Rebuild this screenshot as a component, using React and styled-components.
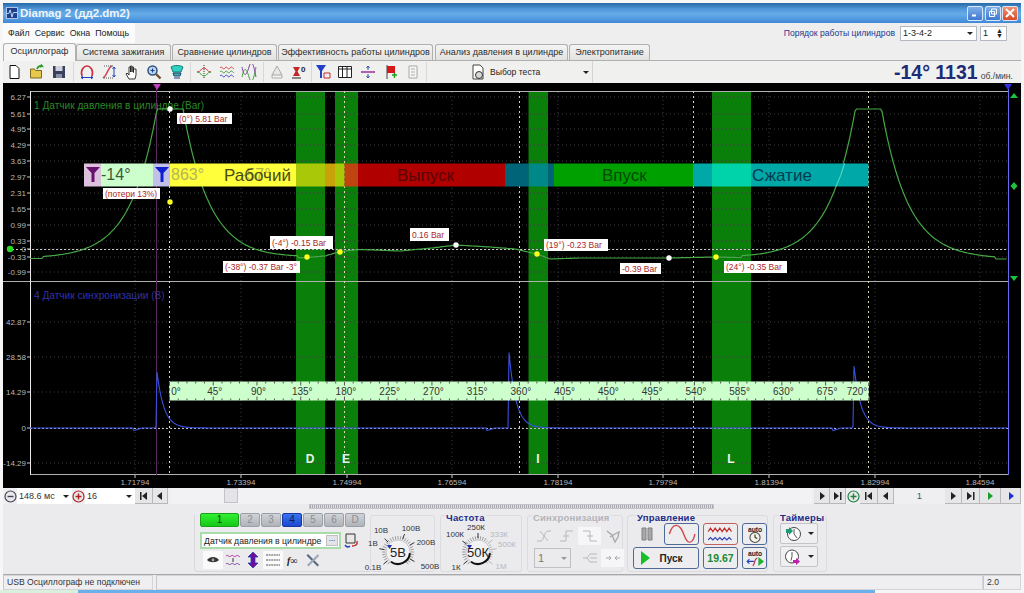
import React from 'react'
import styled, { createGlobalStyle } from 'styled-components'

const GlobalStyle = createGlobalStyle`
  html, body { margin: 0; padding: 0; background: #f6f6f6; overflow: hidden; }
  * { box-sizing: border-box; }
  body { font-family: "Liberation Sans", Arial, sans-serif; font-size: 10px; color: #222; }
`

/* ---------- chart data (page coordinates) ---------- */
const topTicks = [
  ['6.27', 97], ['5.61', 114], ['4.95', 129], ['4.29', 145], ['3.63', 161], ['2.97', 177],
  ['2.31', 193], ['1.65', 209], ['0.99', 225], ['0.33', 241], ['0', 249], ['-0.33', 257], ['-0.99', 272],
]
const lowTicks = [['42.87', 322], ['28.58', 357], ['14.29', 392], ['0', 428], ['-14.29', 463]]
const timeTicks = [
  ['1.71794', 135], ['1.73394', 241], ['1.74994', 347], ['1.76594', 452], ['1.78194', 558],
  ['1.79794', 663], ['1.81394', 769], ['1.82994', 875], ['1.84594', 980],
]
const greenBars = [
  { x: 296, w: 29, l: 'D' }, { x: 335, w: 23, l: 'E', lx: 346 }, { x: 528.5, w: 19.5, l: 'I', lx: 538 }, { x: 712, w: 39, l: 'L', lx: 731 },
]
const phases = [
  [170, 126, '#ffff3c'], [296, 29, '#a8c808'], [325, 10, '#c8a208'], [335, 9.5, '#a8c808'], [344.5, 13.5, '#c04410'],
  [358, 147, '#b00000'], [505, 23.5, '#006478'], [528.5, 19.5, '#008888'], [548, 6, '#006478'], [554, 139, '#00a000'],
  [693, 19, '#00a8a8'], [712, 39, '#00d2aa'], [751, 117.5, '#00a8a8'],
]
const callouts = [
  { x: 177, y: 113, w: 55, h: 11, t: '(0°) 5.81 Bar' },
  { x: 103, y: 188, w: 57, h: 11, t: '(потери 13%)' },
  { x: 270, y: 236, w: 63, h: 13, t: '(-4°) -0.15 Bar' },
  { x: 223, y: 261, w: 77, h: 12, t: '(-38°) -0.37 Bar -3°' },
  { x: 410, y: 228, w: 39, h: 13, t: '0.16 Bar' },
  { x: 544, y: 239, w: 64, h: 12, t: '(19°) -0.23 Bar' },
  { x: 620, y: 263, w: 41, h: 11, t: '-0.39 Bar' },
  { x: 724, y: 261, w: 63, h: 12, t: '(24°) -0.35 Bar' },
]
const dots = [
  [170, 109, '#fff'], [170, 202, '#ffff20'], [307, 257, '#ffff20'], [340, 252, '#ffff20'], [456, 245, '#fff'],
  [537, 254, '#ffff20'], [669, 258, '#fff'], [716, 257, '#ffff20'],
]
const basePts = [
  [30, 258.5], [250, 259], [307, 257.5], [325, 256], [340, 251.5], [360, 249.5], [400, 251], [432, 248], [456, 245],
  [490, 247], [515, 249], [537, 254], [550, 259], [580, 258], [669, 258], [716, 257], [760, 258], [1008, 259],
]
const base = x => {
  for (let i = 1; i < basePts.length; i++) {
    if (x <= basePts[i][0]) {
      const [a, b] = basePts[i - 1]
      const [c, d] = basePts[i]
      return b + ((d - b) * (x - a)) / (c - a)
    }
  }
  return 259
}
const pressurePath = () => {
  const pts = []
  for (let x = 30; x <= 1007; x += 1.5) {
    const a = 245 * Math.exp(-Math.abs(x - 170) / 26.5)
    const b = 245 * Math.exp(-Math.abs(x - 868.5) / 26.5)
    const bump = Math.max(a, b)
    const y = bump > 2 ? Math.max(109, base(x) - Math.min(150, bump)) : base(x)
    pts.push(`${x},${y.toFixed(1)}`)
  }
  return pts.join(' ')
}
const syncPath = () => {
  const spikes = [[157, 56, 134], [508.5, 81, 487], [854, 62, 833]]
  const pts = []
  for (let x = 30; x <= 1007; x += 1) {
    let y = 428
    spikes.forEach(([s, amp, dip]) => {
      if (x >= s) y -= amp * Math.exp(-(x - s) / 7)
      if (x > dip - 1 && x < dip + 8) y += 2.6 * (1 - Math.abs(x - dip) / 8)
      if (x === s - 1) y = 426
    })
    pts.push(`${x},${y.toFixed(1)}`)
  }
  return pts.join(' ')
}

/* ---------- icons ---------- */
const icons = {
  new: <path d="M4 1.5h6l3 3v10H4z" fill="#fff" stroke="#111" />,
  open: <><path d="M1.5 14V5h4l1 1.5h6V14z" fill="#e6c84a" stroke="#7a6a20" /><path d="M8 5c1-3 3-3.500 5-3l-1-1.500M13 2l-2 1" fill="none" stroke="#2c9a2c" strokeWidth="1.800" /></>,
  save: <><path d="M2 2h12v12H2z" fill="#38405c" /><path d="M4.500 2h7v5h-7z" fill="#cfd3e0" /><path d="M5 10h6v4H5z" fill="#8890a8" /></>,
  arc: <><path d="M3 12C1 6 5 2 8 2s7 4 5 10" fill="none" stroke="#d03040" strokeWidth="1.600" /><path d="M2 13.500h12M2 13.500l2-1.500M2 13.500l2 1.500M14 13.500l-2-1.500M14 13.500l-2 1.500" stroke="#2040c0" fill="none" /></>,
  peak: <><path d="M2 14C6 12 7 3 11 2" fill="none" stroke="#d04050" strokeWidth="1.400" /><path d="M3 2h10M3 14h10" stroke="#555" strokeDasharray="1 1" /><path d="M13 3v10M13 3l-1.500 2M13 3l1.500 2M13 13l-1.500-2M13 13l1.500-2" stroke="#2040c0" fill="none" /></>,
  hand: <path d="M5 15l-3-5 1-1 2 2V3h1.500v5V2h1.500v6V3h1.500v5.500V5H12v6l-1 4z" fill="#fff" stroke="#222" strokeWidth=".9" />,
  zoom: <><circle cx="6.500" cy="6.500" r="4.500" fill="#b8d8f0" stroke="#305080" strokeWidth="1.500" /><path d="M4.500 6.500h4M6.500 4.500v4" stroke="#204080" /><path d="M10 10l4.500 4.500" stroke="#705030" strokeWidth="2.400" /></>,
  stack: <><path d="M2 3c3-2 9-2 12 0l-2 5H4z" fill="#30d0c0" stroke="#108078" /><path d="M4 9h8l-1 3H5zM5 14h6" fill="#40b0a0" stroke="#204080" /></>,
  star: <><path d="M8 1v14" stroke="#333" strokeDasharray="1 1" /><path d="M1 8c4 0 4-4 7-4s3 4 7 4" fill="none" stroke="#d04040" /><path d="M1 8c4 0 4 4 7 4s3-4 7-4" fill="none" stroke="#40a040" /></>,
  waves3: <><path d="M1 4c2-3 3 3 5 0s3 3 5 0 3 2 4 0" fill="none" stroke="#d04040" /><path d="M1 8c2-3 3 3 5 0s3 3 5 0 3 2 4 0" fill="none" stroke="#40a040" /><path d="M1 12c2-3 3 3 5 0s3 3 5 0 3 2 4 0" fill="none" stroke="#4040d0" /></>,
  waves2: <><path d="M1 13C3 3 5 3 8 13s5 0 7-10" fill="none" stroke="#40a040" /><path d="M1 3c2 10 4 10 7 0s5 0 7 10" fill="none" stroke="#8040a0" /></>,
  auto: <><path d="M8 2l5 9H3z" fill="#e8e8e8" stroke="#a8a8a8" /><path d="M3 11v3h10v-3" fill="none" stroke="#b0b0b0" /></>,
  zero: <><path d="M2 3h7L6.500 7.500 9 12H2l2.500-4.500z" fill="#c02828" /><path d="M1 14h9" stroke="#222" /><text x="10" y="8" fontSize="8" fontWeight="700" fill="#222" fontFamily="Liberation Sans">0</text></>,
  funnel: <><path d="M1 1h10L7 7v7H5V7z" fill="#2040c8" /><path d="M9 9h6v5H9z" fill="#f0f0f0" stroke="#c03030" /></>,
  table: <path d="M1.500 2.500h13v11h-13zM1.500 5h13M5.500 2.500v11M10 2.500v11" fill="#fff" stroke="#222" />,
  divide: <><path d="M1 8h14" stroke="#902090" strokeWidth="1.400" /><path d="M8 2v4M8 2L6.500 4M8 2l1.500 2M8 14v-4M8 14l-1.500-2M8 14l1.500-2" fill="none" stroke="#3050b0" /></>,
  flag: <><path d="M5 1v14" stroke="#444" /><path d="M5 2h8v7H5z" fill="#d81818" /><path d="M10 11h5M12.500 9v5" stroke="#20a020" strokeWidth="1.400" /></>,
  page: <path d="M4 2h8v12H4zM6 5h4M6 8h4M6 11h4" fill="#f8f8f8" stroke="#a8a8a8" />,
  gearPage: <><path d="M3 1h7l3 3v11H3z" fill="#fff" stroke="#444" /><circle cx="9" cy="11" r="3.500" fill="#d8d8d8" stroke="#333" /></>,
  eye: <><path d="M2 8c3-4 9-4 12 0-3 3-9 3-12 0z" fill="#333" /><circle cx="8" cy="8" r="1.400" fill="#aaa" /></>,
  wavesV: <><path d="M1 4c2-2 3 2 5 0s3 2 5 0 3 2 4 0" fill="none" stroke="#b030a0" /><path d="M8 6v4" stroke="#333" /><path d="M1 12c2-2 3 2 5 0s3 2 5 0 3 2 4 0" fill="none" stroke="#8040a0" /></>,
  updown: <path d="M8 0l5 5h-3v6h3l-5 5-5-5h3V5H3z" fill="#6a10a0" stroke="#2030b0" strokeWidth=".7" />,
  lines: <path d="M1 3h14M1 8h14M1 13h14" stroke="#555" strokeDasharray="2 .6" />,
  fx: <text x="2" y="12" fontSize="10" fontWeight="700" fontStyle="italic" fill="#222" fontFamily="Liberation Serif">f∞</text>,
  tools: <><path d="M3 2l11 11-1.500 1.500L1.500 3.500z" fill="#5a6a80" /><path d="M13 2L2 13l1.500 1.500L14 4z" fill="#9aa8b8" /></>,
  board: <><path d="M3 1h9v9H3z" fill="#e8e8e8" stroke="#333" /><path d="M2 12c2 3 4 2 5 1" fill="none" stroke="#2040c0" strokeWidth="1.400" /><path d="M14 8c1 4-2 5-5 5" fill="none" stroke="#c02020" strokeWidth="1.400" /></>,
  slope: <path d="M1 13h4C8 13 8 3 12 3h3M4 3l8 10" fill="none" stroke="#b8b8b8" />,
  rise: <path d="M1 13h6V3h7M4 8h6" fill="none" stroke="#b8b8b8" />,
  fall: <path d="M1 3h7v10h7M5 8h6" fill="none" stroke="#b8b8b8" />,
  pulseOff: <path d="M2 3l5 4 3 7 3-5 1-5-4 2-5 3" fill="none" stroke="#a8a8a8" strokeWidth="1.300" />,
  branch: <path d="M1 8h4M5 8l3-4h7M5 8l3 4h7M8 8h7" fill="none" stroke="#b8b8b8" />,
  merge: <path d="M1 8h5l-2-2M6 8l-2 2M15 8h-5l2-2M10 8l2 2" fill="none" stroke="#a8a8a8" />,
  pause: <path d="M3 2h4v12H3zM9 2h4v12H9z" fill="#a8a8a8" stroke="#808080" />,
  sine: <path d="M1 8C4-3 9-1 12 9s7 6 8-1" transform="scale(1.150 1)" fill="none" stroke="#d04a4a" strokeWidth="1.100" />,
  wave2: <><path d="M1 6l2-3 2 3 2-3 2 3 2-3 2 3 2-3 2 3 2-3 2 3" fill="none" stroke="#c03030" /><path d="M1 13l2-2 2 2 2-2 2 2 2-2 2 2 2-2 2 2 2-2 2 2" fill="none" stroke="#3040b0" /></>,
  autoClock: <><text x="8" y="6" textAnchor="middle" fontSize="6" fontWeight="700" fill="#223" fontFamily="Liberation Sans">auto</text><circle cx="8" cy="11" r="4.500" fill="#f4f4e8" stroke="#555" /><path d="M8 11V8.500M8 11l2 1" stroke="#333" /></>,
  autoPlay: <><text x="8" y="6" textAnchor="middle" fontSize="6" fontWeight="700" fill="#223" fontFamily="Liberation Sans">auto</text><path d="M11 7l5 4-5 4z" fill="#1eb02e" /><path d="M1 11h6M3 9l-2 2 2 2" fill="none" stroke="#2040c0" /><path d="M6 15c2-1 1-6 4-7" fill="none" stroke="#c03060" /></>,
  clockIn: <><circle cx="9" cy="8" r="6.500" fill="#fff" stroke="#444" /><path d="M9 8V3M9 8l3 4" stroke="#555" /><path d="M1 3h3V1l4 4-4 4V7H1z" fill="#1c9a78" /></>,
  clockOut: <><circle cx="7" cy="7.500" r="6.500" fill="#fff" stroke="#444" /><path d="M7 7.500V3M7 7.500l-1 4" stroke="#555" /><path d="M8 11h3V9l4 3.500L11 16v-2H8z" fill="#c020b0" /></>,
}

const Icon = ({ name, size = 16, vw = 16 }) => (
  <svg width={size} height={size} viewBox={`0 0 ${vw} 16`}>{icons[name]}</svg>
)

/* ---------- window chrome ---------- */
const Window = styled.div`
  width: 1024px;
  height: 593px;
  padding: 3px 3px 0;
  display: flex;
  flex-direction: column;
  overflow: hidden;
`
const TitleBar = styled.div`
  height: 20px;
  flex: none;
  display: flex;
  align-items: center;
  padding: 0 3px 0 3px;
  background: linear-gradient(#2668a8 0, #4f97d8 30%, #66ace8 55%, #4d94de 85%, #3f87d6 100%);
`
const AppLogo = styled.span`
  width: 12px;
  height: 12px;
  background: #1f3f8c;
  border: 1px solid #a8c4e8;
  margin-right: 2px;
  display: flex;
`
const TitleText = styled.span`
  flex: 1;
  color: #eef4fc;
  font: bold 11.500px "Liberation Sans", sans-serif;
  letter-spacing: 0;
`
const WinBtn = styled.span`
  width: 16px;
  height: 15px;
  margin-left: 1.500px;
  border-radius: 2px;
  border: 1px solid #d8e6f8;
  background: ${p => (p.$close ? 'linear-gradient(#f09070,#d84a28)' : 'linear-gradient(#7fb0e8,#3f78d0)')};
  display: flex;
  align-items: center;
  justify-content: center;
`
const MenuRow = styled.div`
  height: 20px;
  flex: none;
  display: flex;
  align-items: center;
  background: #efeeee;
`
const MenuBar = styled.div`
  width: 132px;
  height: 100%;
  background: #fbfbfb;
  display: flex;
  align-items: center;
  gap: 5px;
  padding-left: 5px;
  font-size: 8.800px;
  color: #222;
`
const OrderLabel = styled.span`
  margin-left: auto;
  color: #1c3a90;
  font-size: 8.600px;
  margin-right: 5px;
`
const Field = styled.div`
  width: ${p => p.$w}px;
  height: 15px;
  background: #fff;
  border: 1px solid #b4b8c0;
  font-size: 9px;
  padding-left: 2px;
  display: flex;
  align-items: center;
  margin-right: ${p => p.$mr || 0}px;
`
const Caret = styled.span`
  margin-left: auto;
  margin-right: 3px;
  width: 0;
  height: 0;
  border-left: 3px solid transparent;
  border-right: 3px solid transparent;
  border-top: 3px solid ${p => p.$dim ? '#999' : '#222'};
`
const Spin = styled.span`
  margin-left: auto;
  margin-right: 3px;
  font-size: 7px;
  line-height: 5px;
  color: #222;
  text-align: center;
`
const TabStrip = styled.div`
  height: 18px;
  flex: none;
  display: flex;
  align-items: flex-end;
  background: #efeeee;
  border-bottom: 1px solid #b0b0b0;
`
const Tab = styled.div`
  width: ${p => p.$w}px;
  height: ${p => (p.$on ? 18 : 16)}px;
  margin-left: ${p => p.$ml || 0}px;
  background: ${p => (p.$on ? '#f6f6f6' : 'linear-gradient(#f4f4f2,#e2e2e0)')};
  border: 1px solid #b0b0b0;
  border-bottom: none;
  border-radius: 3px 3px 0 0;
  font-size: 9px;
  text-align: center;
  line-height: ${p => (p.$on ? 15 : 14)}px;
  color: #2c2c2c;
  white-space: nowrap;
  position: relative;
  top: ${p => (p.$on ? 1 : 0)}px;
`
const Toolbar = styled.div`
  height: 22px;
  flex: none;
  display: flex;
  align-items: center;
  background: #f0f0ee;
`
const Tool = styled.span`
  width: 22.500px;
  height: 20px;
  flex: none;
  display: flex;
  align-items: center;
  justify-content: center;
`
const ToolSep = styled.span`
  width: 1px;
  height: 20px;
  flex: none;
  margin: 0 ${p => p.$m ?? 2}px;
  background: #d8d8d8;
`
const TestPick = styled.div`
  width: 164px;
  height: 100%;
  padding-left: 41px;
  display: flex;
  align-items: center;
  gap: 4px;
  font-size: 8.600px;
  border-right: 1px solid #d4d4d4;
`
const Rpm = styled.div`
  margin-left: auto;
  padding-right: 8px;
  color: #1c2c78;
  font-weight: 700;
  font-size: 19.500px;
  display: flex;
  align-items: baseline;
  gap: 3px;
  white-space: nowrap;
`
const RpmUnit = styled.span`
  font-size: 8.600px;
  font-weight: 400;
  color: #444;
`

/* ---------- chart ---------- */
const Scope = styled.svg`
  display: block;
  flex: none;
  width: 1018px;
  height: 405px;
  background: #000;
`
const AxisText = styled.text`
  font-family: "Liberation Sans", sans-serif;
  font-size: 8px;
  fill: #b8b8b8;
  text-anchor: ${p => p.$anchor || 'end'};
`
const ChannelText = styled.text`
  font-family: "Liberation Sans", sans-serif;
  font-size: 10.100px;
  fill: ${p => p.$c};
`
const PhaseText = styled.text`
  font-family: "Liberation Sans", sans-serif;
  font-size: ${p => p.$s || 17}px;
  fill: ${p => p.$c};
`
const CalloutText = styled.text`
  font-family: "Liberation Sans", sans-serif;
  font-size: 8.500px;
  fill: #a82828;
`
const RulerText = styled.text`
  font-family: "Liberation Sans", sans-serif;
  font-size: 10px;
  fill: #333;
  text-anchor: middle;
`
const SectorLetter = styled.text`
  font-family: "Liberation Sans", sans-serif;
  font-size: 12px;
  font-weight: 700;
  fill: #e8f4e8;
  text-anchor: middle;
`

const Funnel = ({ x, c }) => <path d={`M${x} 167h14l-5.500 6v9h-3v-9z`} fill={c} />

const rulerLabelX = d => {
  if (d === 0) return 176
  if (d === 720) return 857
  return 171 + d * 0.972
}

const ScopeView = () => {
  const gridY = [...topTicks, ...lowTicks].map(t => t[1])
  const quarter = [169.5, 344.5, 519.5, 693.5, 868.5]
  const rulerMarks = []
  for (let d = 0; d <= 720; d += 9) rulerMarks.push(d)
  return (
    <Scope viewBox="3 83 1018 405">
      {greenBars.map(b => <rect key={b.l} x={b.x} y={91} width={b.w} height={384} fill="#0a800a" />)}
      {gridY.map(y => <line key={y} x1={30} x2={1008} y1={y} y2={y} stroke="#3c3c3c" strokeDasharray="1 3" />)}
      {timeTicks.map(t => <line key={t[1]} x1={t[1]} x2={t[1]} y1={92} y2={475} stroke="#3c3c3c" strokeDasharray="1 3" />)}

      {/* frame */}
      <path d="M30 91.500H1008M3 281.500H1008M30 474.500H1008" stroke="#b0b0b0" fill="none" />
      <path d="M30.500 91V475" stroke="#e8e8e8" />
      <path d="M1008.500 88V475" stroke="#6a6af0" />
      {[...topTicks, ...lowTicks].map(t => <line key={t[1]} x1={27} x2={30} y1={t[1]} y2={t[1]} stroke="#ccc" />)}
      {topTicks.map(t => <AxisText key={t[0]} x={26} y={t[1] + 3}>{t[0]}</AxisText>)}
      {lowTicks.map(t => <AxisText key={t[1]} x={26} y={t[1] + 3}>{t[0]}</AxisText>)}
      {timeTicks.map(t => (
        <g key={t[0]}>
          <line x1={t[1]} x2={t[1]} y1={475} y2={478} stroke="#ccc" />
          <AxisText $anchor="middle" x={t[1]} y={485}>{t[0]}</AxisText>
        </g>
      ))}
      <ChannelText $c="#2a8a2a" x={34} y={109}>1 Датчик давления в цилиндре (Bar)</ChannelText>
      <ChannelText $c="#3232a8" x={34} y={299}>4 Датчик синхронизации (B)</ChannelText>

      {/* zero line and cycle markers */}
      <line x1={8} x2={1008} y1={249.500} y2={249.500} stroke="#c8c8c8" strokeDasharray="2 2" />
      <line x1={30} x2={1008} y1={428.500} y2={428.500} stroke="#c0c0c0" strokeDasharray="2 2" />
      {quarter.map(x => <line key={x} x1={x} x2={x} y1={91} y2={475} stroke="#d8d8b0" strokeDasharray="2 3" />)}
      <line x1={156.500} x2={156.500} y1={88} y2={475} stroke="#5c2a5c" />
      <path d="M153 84h8l-4 6z" fill="#c040c0" />
      <path d="M1004 84h8l-4 6z" fill="#3030e0" />

      <polyline points={syncPath()} fill="none" stroke="#3a50e0" strokeWidth="1.100" />
      <polyline points={pressurePath()} fill="none" stroke="#44a844" strokeWidth="1.200" />

      {/* phase band */}
      {phases.map(p => <rect key={p[0]} x={p[0]} y={163.500} width={p[1]} height={23} fill={p[2]} />)}
      <rect x={84} y={163.500} width={17} height={23} fill="#dcc0dc" />
      <rect x={101} y={163.500} width={52} height={23} fill="#ccffcc" />
      <rect x={153} y={163.500} width={17} height={23} fill="#c0c0e8" />
      <Funnel x={86} c="#6a1070" />
      <Funnel x={155} c="#1020d0" />
      <PhaseText $s={16} $c="#3c5a3c" x={101} y={180}>-14°</PhaseText>
      <PhaseText $s={16} $c="#b4b45a" x={171} y={180}>863°</PhaseText>
      <PhaseText $s={16} $c="#b8b83c" x={241} y={180}>-57°</PhaseText>
      <PhaseText $c="#4a4a18" x={224} y={181}>Рабочий</PhaseText>
      <PhaseText $c="#5a0404" x={397} y={181}>Выпуск</PhaseText>
      <PhaseText $c="#004a00" x={602} y={181}>Впуск</PhaseText>
      <PhaseText $c="#003c50" x={752} y={181}>Сжатие</PhaseText>
      <path d="M836 186.500Q841 176 844.500 163.500" fill="none" stroke="#60e0c8" />

      {/* degree ruler */}
      <rect x={169.500} y={381.500} width={699} height={19} fill="#ccffcc" />
      {rulerMarks.map(d => {
        const x = 169.5 + d * 0.972
        const major = d % 45 === 0
        return <path key={d} d={`M${x} 381.500v${major ? 4 : 2}M${x} 400.500v-${major ? 4 : 2}`} stroke="#555" />
      })}
      {rulerMarks.filter(d => d % 45 === 0).map(d => (
        <RulerText key={d} x={rulerLabelX(d)} y={395}>{d}°</RulerText>
      ))}

      {greenBars.map(b => <SectorLetter key={b.l} x={b.lx || 310} y={463}>{b.l}</SectorLetter>)}

      {callouts.map(c => (
        <g key={c.t}>
          <rect x={c.x} y={c.y} width={c.w} height={c.h} fill="#fff" />
          <CalloutText x={c.x + 2} y={c.y + c.h / 2 + 3}>{c.t}</CalloutText>
        </g>
      ))}
      {dots.map(d => <circle key={d[0] + '-' + d[1]} cx={d[0]} cy={d[1]} r={2.700} fill={d[2]} />)}
      <circle cx={10} cy={249} r={3.200} fill="#28d828" />
      <path d="M1010 98l4-5 4 5zM1010 276h8l-4 5zM1014 182l3.500 4-3.500 4-3.500-4z" fill="#20c040" />
    </Scope>
  )
}

/* ---------- scroll / navigation row ---------- */
const NavRow = styled.div`
  height: 16px;
  flex: none;
  display: flex;
  align-items: stretch;
  background: #efeff1;
`
const RoundBtn = styled.span`
  width: ${p => p.$w || 14}px;
  flex: none;
  display: flex;
  align-items: center;
  justify-content: center;
`
const NavSelect = styled.div`
  width: ${p => p.$w}px;
  flex: none;
  background: #fff;
  display: flex;
  align-items: center;
  font-size: 9px;
  padding-left: 2px;
  color: #333;
`
const NavBtn = styled.span`
  width: ${p => p.$w || 16}px;
  flex: none;
  display: flex;
  align-items: center;
  justify-content: center;
  background: #e6e6e8;
  border-right: 1px solid #b8b8b8;
  border-bottom: 1px solid #b8b8b8;
`
const ScrollTrack = styled.div`
  flex: 1;
  margin: 0 2px;
  background: #f2f2f4;
  padding-left: 54px;
`
const ScrollThumb = styled.div`
  width: 14px;
  height: 15px;
  background: #e4e4e8;
  border: 1px solid #c4c4c8;
`
const PageNo = styled.span`
  width: 51px;
  flex: none;
  text-align: center;
  line-height: 16px;
  color: #555;
  font-size: 9.500px;
`

const Nav = ({ k, c = '#222' }) => {
  const d = {
    play: 'M3 1l5 4-5 4z',
    end: 'M1 1l5 4-5 4zM7 1h1.500v8H7z',
    start: 'M1 1h1.500v8H1zM8 1L3 5l5 4z',
    back: 'M7 1L2 5l5 4z',
  }[k]
  return <svg width="10" height="10" viewBox="0 0 10 10"><path d={d} fill={c} /></svg>
}
const CircleGlyph = ({ c, plus }) => (
  <svg width="13" height="13" viewBox="0 0 13 13">
    <circle cx="6.500" cy="6.500" r="5.500" fill="#e8e8ec" stroke={c} strokeWidth="1.200" />
    <path d={plus ? 'M3.500 6.500h6M6.500 3.500v6' : 'M3.500 6.500h6'} stroke={c} strokeWidth="1.400" />
  </svg>
)

/* ---------- control panel ---------- */
const Dock = styled.div`
  height: 71px;
  flex: none;
  background: #ebebee;
  border-bottom: 1px solid #a8a8a8;
`
const Splitter = styled.div`
  height: 5px;
  width: 405px;
  margin-left: 306px;
  background: repeating-linear-gradient(90deg, #a8a8b0 0 1px, #e0e0e4 1px 2px);
  border: 1px solid #c4c4c8;
`
const DockRow = styled.div`
  display: flex;
  padding: 6px 0 0 191px;
`
const ChannelGroup = styled.div`
  width: 176px;
  height: 57px;
  padding-left: 5px;
  border-left: 1px solid #d8d8dc;
  border-bottom: 1px solid #d8d8dc;
  border-radius: 0 0 0 4px;
  flex: none;
`
const ChannelBtns = styled.div`
  display: flex;
  gap: 1px;
  margin-top: -2px;
`
const ChannelBtn = styled.span`
  width: ${p => p.$w || 20}px;
  height: 14px;
  border-radius: 2px;
  border: 1px solid ${p => (p.$tone === 'green' ? '#18a018' : p.$tone === 'blue' ? '#1838a8' : '#9aa0a8')};
  background: ${p => (p.$tone === 'green' ? 'linear-gradient(#30f030,#18c818)' : p.$tone === 'blue' ? 'linear-gradient(#3a74f0,#1c48d0)' : 'linear-gradient(#d0d4d8,#b0b4b8)')};
  color: ${p => (p.$tone === 'green' ? '#0c3c0c' : p.$tone === 'blue' ? '#0c1c60' : '#8c8c90')};
  font-size: 10px;
  line-height: 12px;
  text-align: center;
`
const SensorRow = styled.div`
  display: flex;
  align-items: center;
  gap: 2px;
  margin-top: 5px;
`
const SensorBox = styled.div`
  width: 141px;
  height: 17px;
  background: #fff;
  border: 2px solid #a8dca8;
  font-size: 8.700px;
  padding-left: 2px;
  display: flex;
  align-items: center;
  white-space: nowrap;
`
const DotsBtn = styled.span`
  margin-left: auto;
  width: 12px;
  height: 11px;
  margin-right: 1px;
  background: #e4e4e8;
  border: 1px solid #c0c0c4;
  font-size: 8px;
  line-height: 6px;
  text-align: center;
`
const MiniTools = styled.div`
  display: flex;
  margin-top: 2px;
  padding-left: 3px;
`
const MiniTool = styled.span`
  width: 20px;
  height: 18px;
  display: flex;
  align-items: center;
  justify-content: center;
  background: ${p => (p.$on ? '#fafafa' : 'transparent')};
`
const Panel = styled.div`
  width: ${p => p.$w}px;
  height: 57px;
  margin-right: ${p => p.$mr ?? 5}px;
  flex: none;
  border: 1px solid #dcdce0;
  border-radius: 3px;
  display: flex;
  flex-direction: column;
`
const PanelTitle = styled.div`
  margin: -4px 0 0 ${p => p.$ml ?? 4}px;
  height: 11px;
  line-height: 11px;
  font-size: 9.500px;
  font-weight: 700;
  letter-spacing: .2px;
  color: ${p => (p.$dim ? '#b4b4b8' : '#1c2c88')};
  white-space: nowrap;
  background: #ebebee;
  align-self: flex-start;
  padding: 0 1px;
`
const KnobSvg = styled.svg`
  display: block;
  overflow: visible;
`
const KnobLabel = styled.text`
  font-family: "Liberation Sans", sans-serif;
  font-size: 8px;
  fill: ${p => (p.$dim ? '#b8b8bc' : '#333')};
  text-anchor: middle;
`
const KnobValue = styled.text`
  font-family: "Liberation Sans", sans-serif;
  font-size: 13px;
  fill: #222;
  text-anchor: middle;
`
const SyncGrid = styled.div`
  display: grid;
  grid-template-columns: repeat(4, 23px);
  align-items: center;
  padding: 4px 0 0 4px;
  row-gap: 3px;
`
const SyncCell = styled.span`
  height: 18px;
  display: flex;
  align-items: center;
  justify-content: center;
  background: ${p => (p.$on ? '#f6f6f8' : 'transparent')};
`
const SyncSelect = styled.div`
  grid-column: span 2;
  width: 37px;
  height: 20px;
  margin-left: 2px;
  background: #ebebee;
  border: 1px solid #c0c0c4;
  display: flex;
  align-items: center;
  padding-left: 3px;
  font-size: 11px;
  color: #777;
`
const CtlGrid = styled.div`
  display: grid;
  grid-template-columns: 27px 35px 35px 25px;
  column-gap: 4px;
  row-gap: 2px;
  margin: 0 0 0 5px;
`
const CtlBtn = styled.span`
  height: 22px;
  grid-column: span ${p => p.$span || 1};
  border-radius: 3px;
  border: 1px solid ${p => (p.$tone === 'red' ? '#c06060' : p.$tone === 'flat' ? 'transparent' : '#506a98')};
  background: ${p => (p.$tone === 'flat' ? 'transparent' : '#ededf0')};
  display: flex;
  align-items: center;
  justify-content: center;
`
const StartLabel = styled.span`
  font-weight: 700;
  font-size: 10px;
  color: #222;
  flex: 1;
  text-align: center;
  padding-right: 6px;
`
const Readout = styled.span`
  font-weight: 700;
  font-size: 10.500px;
  color: #1c8a30;
`
const PlayMark = styled.span`
  width: 0;
  height: 0;
  margin-left: 7px;
  border-left: 9px solid #18c028;
  border-top: 7px solid transparent;
  border-bottom: 7px solid transparent;
`
const TimerCol = styled.div`
  display: flex;
  flex-direction: column;
  gap: 2px;
  padding-left: 6px;
`
const TimerBtn = styled.span`
  width: 38px;
  height: 21px;
  border: 1px solid #c4c4c8;
  border-radius: 2px;
  background: #efeff2;
  display: flex;
  align-items: center;
  padding-left: 4px;
`

/* ---------- status bar ---------- */
const StatusBar = styled.div`
  height: 15px;
  flex: none;
  display: flex;
  background: #efeff1;
  font-size: 8.600px;
`
const StatusCell = styled.div`
  width: ${p => p.$w}px;
  flex: ${p => (p.$grow ? 1 : 'none')};
  margin-right: ${p => p.$mr || 0}px;
  border: 1px solid #d4d4d8;
  border-left-color: #c8c8cc;
  padding-left: 3px;
  line-height: 13px;
  color: #333;
  white-space: nowrap;
`
const Taskbar = styled.div`
  height: 3px;
  flex: none;
  margin: 0 -3px;
  display: flex;
  background: #f6f6f6;
`
const TaskSeg = styled.span`
  width: ${p => p.$w}px;
  background: ${p => p.$c};
`

const tabs = [
  ['Осциллограф', 73, 0, true], ['Система зажигания', 95, 0], ['Сравнение цилиндров', 105, 1],
  ['Эффективность работы цилиндров', 155, 1], ['Анализ давления в цилиндре', 133, 2], ['Электропитание', 81, 1],
]

const toolGroups = [
  ['new', 'open', 'save'],
  ['arc', 'peak', 'hand', 'zoom', 'stack'],
  ['star', 'waves3', 'waves2'],
  ['auto', 'zero'],
  ['funnel', 'table', 'divide', 'flag', 'page'],
]

const Knob = ({ w, h, cx, cy, value, labels, active, spokes }) => {
  const ticks = []
  for (let a = 130; a <= 410; a += 10) {
    const lit = a >= 130 && a <= active
    const rad = (a * Math.PI) / 180
    const r1 = 12.5
    const r2 = lit ? 16 : 15
    ticks.push(
      <line key={a} x1={cx + r1 * Math.cos(rad)} y1={cy + r1 * Math.sin(rad)} x2={cx + r2 * Math.cos(rad)} y2={cy + r2 * Math.sin(rad)}
        stroke={lit ? '#9c9ca0' : '#b8b8bc'} />
    )
  }
  return (
    <KnobSvg width={w} height={h} viewBox={`0 0 ${w} ${h}`}>
      {ticks}
      <circle cx={cx} cy={cy} r={12} fill="#f2f2f4" stroke="#c8c8cc" />
      <path d={`M${cx + 12 * Math.cos(2.2)} ${cy + 12 * Math.sin(2.2)}A12 12 0 0 0 ${cx + 12 * Math.cos(0.1)} ${cy + 12 * Math.sin(0.1)}`}
        fill="none" stroke="#111" strokeWidth="2" />
      <path d={`M${cx - 11} ${cy - 7}l5 0l-2.500 4z`} fill="#2030b0" />
      {spokes.map((s, i) => {
        const rad = (s.a * Math.PI) / 180
        return (
          <line key={i} x1={cx + 14 * Math.cos(rad)} y1={cy + 14 * Math.sin(rad)} x2={cx + 19 * Math.cos(rad)} y2={cy + 19 * Math.sin(rad)}
            stroke={s.dim ? '#b8b8bc' : '#333'} />
        )
      })}
      <KnobValue x={cx} y={cy + 5}>{value}</KnobValue>
      {labels.map(l => <KnobLabel key={l.t} x={l.x} y={l.y} $dim={l.dim}>{l.t}</KnobLabel>)}
    </KnobSvg>
  )
}

const App = () => (
  <>
    <GlobalStyle />
    <Window>
      <TitleBar>
        <AppLogo>
          <svg width="10" height="10" viewBox="0 0 11 11"><path d="M0 6h2l1.500-4 2 8 1.500-5h4" fill="none" stroke="#cfe4ff" /></svg>
        </AppLogo>
        <TitleText>Diamag 2 (дд2.dm2)</TitleText>
        <WinBtn>
          <svg width="8" height="8" viewBox="0 0 8 8"><path d="M1 5.500h4v2H1z" fill="#fff" /></svg>
        </WinBtn>
        <WinBtn>
          <svg width="10" height="10" viewBox="0 0 10 10"><path d="M3.500 1h5v5h-5zM1.500 3.500h5v5h-5z" fill="none" stroke="#fff" /></svg>
        </WinBtn>
        <WinBtn $close>
          <svg width="10" height="10" viewBox="0 0 10 10"><path d="M1 1l8 8M9 1l-8 8" stroke="#fff" strokeWidth="2" /></svg>
        </WinBtn>
      </TitleBar>

      <MenuRow>
        <MenuBar>
          <span>Файл</span><span>Сервис</span><span>Окна</span><span>Помощь</span>
        </MenuBar>
        <OrderLabel>Порядок работы цилиндров</OrderLabel>
        <Field $w={77} $mr={3}>1-3-4-2<Caret /></Field>
        <Field $w={27} $mr={14}>1<Spin>▲<br />▼</Spin></Field>
      </MenuRow>

      <TabStrip>
        {tabs.map(([t, w, ml, on]) => <Tab key={t} $w={w} $ml={ml} $on={on}>{t}</Tab>)}
      </TabStrip>

      <Toolbar>
        {toolGroups.map((g, i) => (
          <React.Fragment key={g[0]}>
            {g.map(n => <Tool key={n}><Icon name={n} /></Tool>)}
            <ToolSep $m={i === 3 ? 0 : 2} />
          </React.Fragment>
        ))}
        <TestPick>
          <Icon name="gearPage" />
          <span>Выбор теста</span>
          <Caret />
        </TestPick>
        <Rpm>-14° 1131<RpmUnit>об./мин.</RpmUnit></Rpm>
      </Toolbar>

      <ScopeView />

      <NavRow>
        <RoundBtn><CircleGlyph c="#445" /></RoundBtn>
        <NavSelect $w={55}>148.6 мс<Caret /></NavSelect>
        <RoundBtn $w={13}><CircleGlyph c="#b02020" plus /></RoundBtn>
        <NavSelect $w={50}>16<Caret /></NavSelect>
        <NavBtn $w={18}><Nav k="start" /></NavBtn>
        <NavBtn $w={15}><Nav k="back" /></NavBtn>
        <ScrollTrack><ScrollThumb /></ScrollTrack>
        <NavBtn><Nav k="play" /></NavBtn>
        <NavBtn><Nav k="end" /></NavBtn>
        <RoundBtn><CircleGlyph c="#208040" plus /></RoundBtn>
        <NavBtn $w={18}><Nav k="start" /></NavBtn>
        <NavBtn><Nav k="back" /></NavBtn>
        <PageNo>1</PageNo>
        <NavBtn $w={17}><Nav k="play" /></NavBtn>
        <NavBtn $w={18}><Nav k="end" /></NavBtn>
        <NavBtn $w={21}><Nav k="play" c="#18a028" /></NavBtn>
        <NavBtn $w={20}><Nav k="play" c="#1830d8" /></NavBtn>
      </NavRow>

      <Dock>
        <Splitter />
        <DockRow>
          <ChannelGroup>
            <ChannelBtns>
              <ChannelBtn $w={39} $tone="green">1</ChannelBtn>
              <ChannelBtn>2</ChannelBtn>
              <ChannelBtn>3</ChannelBtn>
              <ChannelBtn $tone="blue">4</ChannelBtn>
              <ChannelBtn>5</ChannelBtn>
              <ChannelBtn>6</ChannelBtn>
              <ChannelBtn>D</ChannelBtn>
            </ChannelBtns>
            <SensorRow>
              <SensorBox>Датчик давления в цилиндре<DotsBtn>...</DotsBtn></SensorBox>
              <Icon name="board" />
            </SensorRow>
            <MiniTools>
              <MiniTool $on><Icon name="eye" /></MiniTool>
              <MiniTool><Icon name="wavesV" /></MiniTool>
              <MiniTool><Icon name="updown" /></MiniTool>
              <MiniTool $on><Icon name="lines" /></MiniTool>
              <MiniTool><Icon name="fx" /></MiniTool>
              <MiniTool><Icon name="tools" /></MiniTool>
            </MiniTools>
          </ChannelGroup>

          <Panel $w={65}>
            <Knob w={63} h={55} cx={27} cy={36} value="5В" active={410}
              spokes={[{ a: 225 }, { a: 290 }, { a: 330 }, { a: 30 }, { a: 140 }, { a: 190 }]}
              labels={[
                { t: '10В', x: 10, y: 17 }, { t: '100В', x: 40, y: 15 },
                { t: '1В', x: 2, y: 30 }, { t: '200В', x: 55, y: 29 },
                { t: '0.1В', x: 2, y: 54 }, { t: '500В', x: 59, y: 53 },
              ]} />
          </Panel>

          <Panel $w={82}>
            <PanelTitle>Частота</PanelTitle>
            <Knob w={80} h={48} cx={37} cy={29} value="50К" active={300}
              spokes={[{ a: 215 }, { a: 270 }, { a: 320, dim: true }, { a: 350, dim: true }, { a: 140 }, { a: 40, dim: true }]}
              labels={[
                { t: '250К', x: 35, y: 7 }, { t: '100К', x: 14, y: 14 }, { t: '333К', x: 58, y: 14, dim: true },
                { t: '500К', x: 66, y: 24, dim: true }, { t: '1К', x: 15, y: 47 }, { t: '1М', x: 60, y: 46, dim: true },
              ]} />
          </Panel>

          <Panel $w={96} $mr={4}>
            <PanelTitle $dim>Синхронизация</PanelTitle>
            <SyncGrid>
              <SyncCell><Icon name="slope" /></SyncCell>
              <SyncCell><Icon name="rise" /></SyncCell>
              <SyncCell $on><Icon name="fall" /></SyncCell>
              <SyncCell><Icon name="pulseOff" /></SyncCell>
              <SyncSelect>1<Caret $dim /></SyncSelect>
              <SyncCell><Icon name="branch" /></SyncCell>
              <SyncCell $on><Icon name="merge" /></SyncCell>
            </SyncGrid>
          </Panel>

          <Panel $w={141}>
            <PanelTitle $ml={8}>Управление</PanelTitle>
            <CtlGrid>
              <CtlBtn $tone="flat"><Icon name="pause" /></CtlBtn>
              <CtlBtn><Icon name="sine" size={28} vw={24} /></CtlBtn>
              <CtlBtn $tone="red"><Icon name="wave2" size={28} vw={24} /></CtlBtn>
              <CtlBtn><Icon name="autoClock" size={18} /></CtlBtn>
              <CtlBtn $span={2}><PlayMark /><StartLabel>Пуск</StartLabel></CtlBtn>
              <CtlBtn><Readout>19.67</Readout></CtlBtn>
              <CtlBtn><Icon name="autoPlay" size={18} /></CtlBtn>
            </CtlGrid>
          </Panel>

          <Panel $w={54}>
            <PanelTitle $ml={5}>Таймеры</PanelTitle>
            <TimerCol>
              <TimerBtn><Icon name="clockIn" /><Caret /></TimerBtn>
              <TimerBtn><Icon name="clockOut" /><Caret /></TimerBtn>
            </TimerCol>
          </Panel>
        </DockRow>
      </Dock>

      <StatusBar>
        <StatusCell $w={150} $mr={3}>USB Осциллограф не подключен</StatusCell>
        <StatusCell $grow />
        <StatusCell $w={38}>2.0</StatusCell>
      </StatusBar>
      <Taskbar>
        <TaskSeg $w={78} $c="#d8f0dc" />
        <TaskSeg $w={797} $c="#6ab0ea" />
      </Taskbar>
    </Window>
  </>
)

export default App
